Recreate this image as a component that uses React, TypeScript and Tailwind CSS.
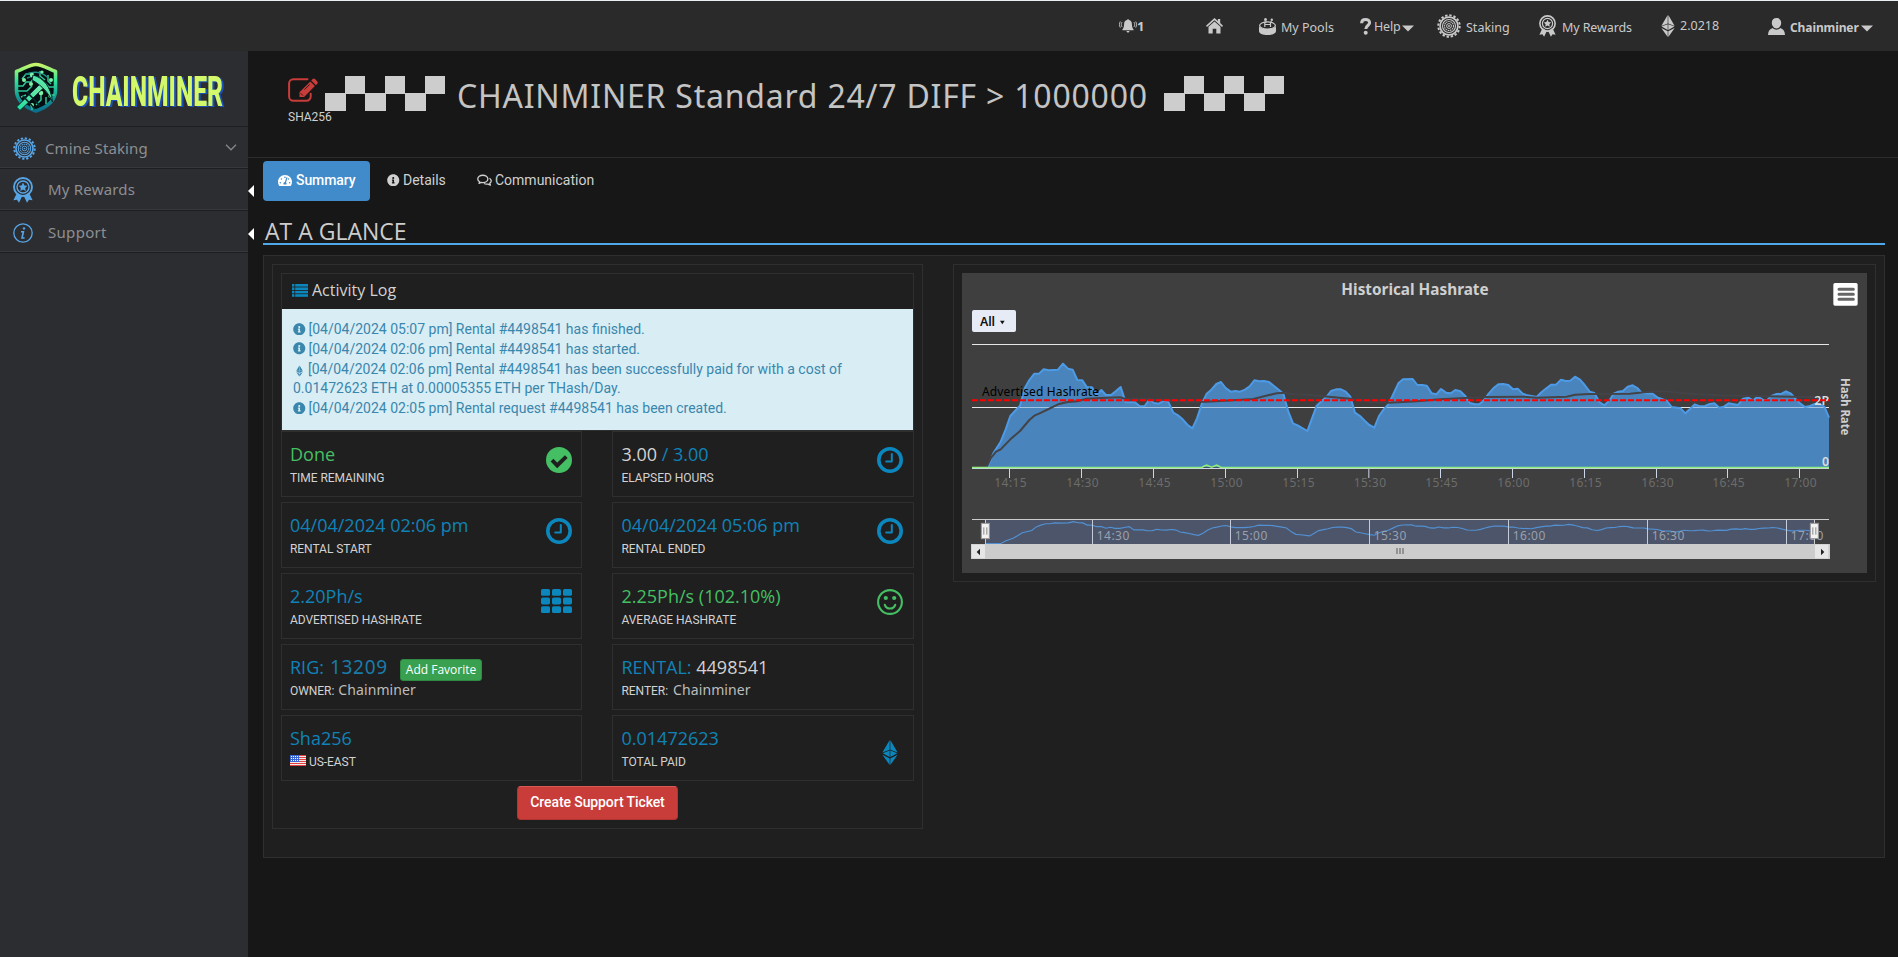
import React from "react";
import { FaInfoCircle, FaTachometerAlt } from "react-icons/fa";

type IconProps = { className?: string };

const GearIcon = ({ className }: IconProps) => (
  <svg viewBox="0 0 24 24" className={className} fill="none" stroke="currentColor">
    <circle cx="12" cy="12" r="10.7" strokeWidth="2" strokeDasharray="2.4 1.8" />
    <circle cx="12" cy="12" r="8.9" strokeWidth="1.7" />
    <circle cx="12" cy="12" r="6.5" strokeWidth="1.1" />
    <circle cx="12" cy="12" r="4.5" strokeWidth="1.1" strokeDasharray="1.6 .6" />
    <circle cx="12" cy="12" r="2.4" strokeWidth="1" />
    <circle cx="12" cy="12" r=".9" fill="currentColor" stroke="none" />
  </svg>
);

const RibbonIcon = ({ className }: IconProps) => (
  <svg viewBox="0 0 20 26" className={className} fill="none" stroke="currentColor">
    <path d="M4.2 15.5 0.4 23.3l3.6-.6 2 3 3.2-6.8ZM15.8 15.5l3.8 7.8-3.6-.6-2 3-3.2-6.8Z" fill="currentColor" stroke="none" />
    <circle cx="10" cy="10" r="9" strokeWidth="1.9" />
    <circle cx="10" cy="10" r="6" strokeWidth="1.4" />
    <path d="m10 5.6 1.35 2.8 3.05.4-2.2 2.15.5 3.05L10 12.5 7.3 14l.5-3.05L5.6 8.8l3.05-.4Z" fill="currentColor" stroke="none" />
  </svg>
);

const ClockIcon = () => (
  <svg viewBox="0 0 26 26" className="size-[26px] text-[#0b87bd]" fill="none" stroke="currentColor">
    <circle cx="13" cy="13" r="11.2" strokeWidth="3.6" />
    <path d="M14.8 7v7.6H9.2" strokeWidth="2" strokeLinecap="round" strokeLinejoin="round" />
  </svg>
);

const CheckIcon = () => (
  <svg viewBox="0 0 26 26" className="size-[26px]">
    <circle cx="13" cy="13" r="13" fill="#45bf63" />
    <path d="m6 13.2 5.2 5.2L20.3 9.6" fill="none" stroke="#1f1f1f" strokeWidth="3.9" />
  </svg>
);

const SmileIcon = () => (
  <svg viewBox="0 0 26 26" className="size-[26px]" fill="none" stroke="#45bf63" strokeWidth="2.1">
    <circle cx="13" cy="13" r="11.9" />
    <path d="M7.8 15.8a5.5 5.5 0 0 0 10.4 0" strokeLinecap="round" />
    <circle cx="8.8" cy="9" r="2.1" fill="#45bf63" stroke="none" />
    <circle cx="17.2" cy="9" r="2.1" fill="#45bf63" stroke="none" />
  </svg>
);

const GridIcon = () => (
  <svg viewBox="0 0 31 24" className="h-6 w-[31px]" fill="#0b87bd">
    {[0, 8.6, 17.2].map((y) =>
      [0, 11, 22].map((x) => <rect key={`${x}-${y}`} x={x} y={y} width="9" height="6.8" rx="1.6" />),
    )}
  </svg>
);

const ListIcon = () => (
  <svg viewBox="0 0 16 13" className="-mt-[3px] h-[13px] w-4" fill="#0b87bd">
    {[0, 3.4, 6.8, 10.2].map((y) => (
      <g key={y}>
        <rect x="0" y={y} width="2.4" height="2.6" />
        <rect x="3.2" y={y} width="12.8" height="2.6" />
      </g>
    ))}
  </svg>
);

const EditIcon = () => (
  <svg viewBox="0 0 30 24" className="h-6 w-[30px]" fill="none" stroke="#c83c3a">
    <path d="M19.5 1.2H5.3A4.2 4.2 0 0 0 1.1 5.4v13.2a4.2 4.2 0 0 0 4.2 4.2h13.2a4.2 4.2 0 0 0 4.2-4.2v-2.8" strokeWidth="2" strokeLinecap="round" />
    <path d="m11.5 14.2 10.8-10.8 4.6 4.6L16.1 18.9h-4.6Z" fill="#c83c3a" stroke="none" />
    <path d="m23.2 2.5 1.4-1.4a1.8 1.8 0 0 1 2.4 0l2.3 2.3a1.8 1.8 0 0 1 0 2.4l-1.4 1.4Z" fill="#c83c3a" stroke="none" />
    <path d="m16.5 11.6 5.2-5.2M12.6 15.2l2.4 2.4" stroke="#171717" strokeWidth=".9" />
  </svg>
);

const CommentsIcon = () => (
  <svg viewBox="0 0 16 13" className="h-[13px] w-[15px]" fill="none" stroke="currentColor" strokeWidth="1.4" strokeLinejoin="round">
    <path d="M6.2.9C3.2.9.8 2.6.8 4.8c0 1.2.8 2.3 2 3L2.2 9.6l2.2-1.1c.6.1 1.2.2 1.8.2 3 0 5.4-1.7 5.4-3.9S9.2.9 6.2.9Z" />
    <path d="M13.3 4.1c1.2.7 1.9 1.6 1.9 2.7 0 1.1-.6 2-1.6 2.7l.7 2-2.5-1.2c-1.5.3-3.1.1-4.3-.6" />
  </svg>
);

const BellIcon = () => (
  <svg viewBox="0 0 18 14" className="h-[14px] w-[18px]" fill="currentColor">
    <path d="M9 .2c.6 0 1 .4 1 .9 2 .5 2.9 2 2.9 4 0 2.8.6 4.3 1.7 5.4v.8H3.4v-.8c1.1-1.1 1.7-2.6 1.7-5.4 0-2 .9-3.5 2.9-4 0-.5.4-.9 1-.9ZM7.5 12h3c0 .9-.6 1.5-1.5 1.5S7.5 12.9 7.5 12Z" />
    <path d="M3 3.2c-.9 1.5-.9 3.2 0 4.7M1.3 2.5c-1.1 2-1.1 4.1 0 6.1M15 3.2c.9 1.5.9 3.2 0 4.7M16.7 2.5c1.1 2 1.1 4.1 0 6.1" fill="none" stroke="currentColor" strokeWidth=".9" />
  </svg>
);

const HomeIcon = () => (
  <svg viewBox="0 0 17 16" className="h-4 w-[17px]" fill="currentColor">
    <path d="M8.5 0 11.9 3V1h2.3v4.1L17 7.7l-1 1.2L8.5 2.2 1 8.9 0 7.7Z" />
    <path d="m8.5 3.4 6 5.4v6.7h-4.2v-4.7H6.7v4.7H2.5V8.8Z" />
  </svg>
);

const PoolIcon = () => (
  <svg viewBox="0 0 17 17" className="ml-px size-[17px]" fill="currentColor">
    <circle cx="6.5" cy="1.5" r="1.5" />
    <circle cx="12.8" cy="1.7" r="1.2" />
    <ellipse cx="8.5" cy="7.5" rx="7.9" ry="3.6" fill="none" stroke="currentColor" strokeWidth="1.2" />
    <path d="M0 8.5c2.5 3.4 14.500 3.4 17 0v4.7c0 2.2-3.8 3.8-8.500 3.8S0 15.4 0 13.2Z" />
    <path d="M5.8 9V4.2l1.8-.4M11.5 9V4.2l1.5-.4M5.8 6.500h5.7" fill="none" stroke="currentColor" strokeWidth="1.2" />
  </svg>
);

const UserIcon = () => (
  <svg viewBox="0 0 17 17" className="ml-px size-[17px]" fill="currentColor">
    <path d="M8.5 0c2.800 0 4.700 1.900 4.700 4.800 0 2.700-1.800 5.700-4.700 5.700S3.800 7.500 3.800 4.800C3.800 1.900 5.700 0 8.500 0ZM4.700 10c2.200 2.300 5.400 2.300 7.600 0 2.900.9 4.500 2.900 4.700 6.900H0c.2-4 1.800-6 4.700-6.900Z" />
  </svg>
);

const EthIcon = ({ className }: IconProps) => (
  <svg viewBox="0 0 14 22" className={className} fill="currentColor">
    <path d="M6.7 0v8.500L.3 11ZM7.3 0v8.500l6.400 2.500ZM6.700 9.200v5.800L.6 11.600ZM7.300 9.200v5.800l6.100-3.400ZM6.700 16.300V22L.3 13ZM7.300 16.300V22l6.400-9Z" />
  </svg>
);

const Flag = () => (
  <svg viewBox="0 0 16 11" className="h-[11px] w-4">
    <rect width="16" height="11" fill="#f4e9e9" />
    {[0, 2, 4, 6, 8, 10].map((y) => (
      <rect key={y} y={y} width="16" height="1" fill="#e0403f" />
    ))}
    <rect width="9" height="7" fill="#3a66d6" />
    {[1, 3, 5].map((y) => (
      <path key={y} d={`M1 ${y}.5h7`} stroke="#fff" strokeWidth="1" strokeDasharray="1 1" />
    ))}
  </svg>
);

const Checkers = () => (
  <svg viewBox="0 0 120 35" className="h-[35px] w-[120px]" fill="#cdcdcd" shapeRendering="crispEdges">
    {[0, 40, 80].map((x) => (
      <g key={x}>
        <rect x={x} y="17" width="21" height="18" />
        <rect x={x + 20} y="0" width="20" height="18" />
      </g>
    ))}
  </svg>
);

const Logo = () => (
  <svg viewBox="0 0 240 60" className="h-[60px] w-[240px] overflow-visible">
    <defs>
      <linearGradient id="shield" x1="0" y1="0" x2="0" y2="1">
        <stop offset="0" stopColor="#c6f56a" />
        <stop offset=".35" stopColor="#2fe39a" />
        <stop offset=".7" stopColor="#129a94" />
        <stop offset="1" stopColor="#0b6f8c" />
      </linearGradient>
      <linearGradient id="pick" x1="1" y1="0" x2="0" y2="1">
        <stop offset="0" stopColor="#7fe8a8" />
        <stop offset="1" stopColor="#1fe0a0" />
      </linearGradient>
    </defs>
    <path d="M36 9.5c5.500 0 11 3.500 19.500 7v18.500c0 10-8 17-19.500 21-11.500-4-19.500-11-19.500-21V16.500C25 13 30.500 9.500 36 9.500Z" fill="#050d10" stroke="url(#shield)" strokeWidth="3.6" strokeLinejoin="round" />
    <g fill="none" stroke="#2fc596" strokeWidth="1.5">
      <path d="M17 31h6l3-4h5l3-4M18 36h9l5-5M22 24l4-5h7M40 16v5l5 4M48 20v6l3 3M55 32h-6l-4-4M55 40h-5l-3-3M41 38v7l-5 5M32 50v5M46 42v7M26 40l-5 2" />
      <path d="M25 20c6-4 16-4 22 2M27 23c5-2 9-2 13 0" stroke="#1b8f86" />
    </g>
    <g fill="#7df0a4">
      <circle cx="32" cy="20" r="2.2" />
      <circle cx="24" cy="25" r="2" />
      <circle cx="31" cy="29" r="2" />
      <circle cx="41" cy="38" r="2.3" />
      <circle cx="51" cy="25" r="2" />
      <circle cx="32" cy="50" r="2" />
      <circle cx="50" cy="41" r="1.7" />
      <circle cx="42" cy="17" r="1.6" />
    </g>
    <path d="M16.5 52 41 28l4 3.6L20 55.5Z" fill="url(#pick)" stroke="#06262a" />
    <path d="M33 20c11 3 18 12 19.5 27-4-9-10-16-20.5-22Z" fill="url(#pick)" stroke="#06262a" />
    <path d="m27 37 13 14M23 41l12 13" stroke="#06262a" strokeWidth="1.8" />
    <text
      x="72"
      y="51"
      fontFamily="Roboto, sans-serif"
      fontWeight="800"
      fontSize="42"
      textLength="151"
      lengthAdjust="spacingAndGlyphs"
      fill="#d3f96b"
      className="drop-shadow-[2px_1px_0_#1a50b8]"
    >
      CHAINMINER
    </text>
  </svg>
);

const Caret = () => (
  <svg viewBox="0 0 12 7" className="ml-[2px] mt-[4px] h-[7px] w-3" fill="currentColor">
    <path d="M0 .5h12L6 6.5Z" />
  </svg>
);

const Header = () => (
  <header className="h-[51px] border-t border-[#e8eef1] bg-[#2a2a2a] pl-[1119px] text-[#c9c9c9]">
    <nav className="flex h-[50px] items-center whitespace-nowrap font-['Noto_Sans',sans-serif] text-[12.5px]">
      <div className="flex w-[87px] items-center text-[13px] font-bold">
        <BellIcon />
        <span className="mt-px">1</span>
      </div>
      <div className="w-[52px]">
        <HomeIcon />
      </div>
      <div className="flex w-[102px] items-center">
        <PoolIcon />
        <span className="ml-[5px] mt-[4px]">My Pools</span>
      </div>
      <div className="flex w-[77px] items-center">
        <svg viewBox="0 0 11 17" className="h-[17px] w-[11px]" fill="none" stroke="currentColor">
          <path d="M1.6 5.2c0-5 8-4.6 8-.6 0 3-3.8 2.8-3.8 6.4" strokeWidth="3" />
          <circle cx="5.7" cy="14.8" r="2" fill="currentColor" stroke="none" />
        </svg>
        <span className="ml-[3px] mt-[3px] tracking-[-0.2px]">Help</span>
        <Caret />
      </div>
      <div className="flex w-[102px] items-center">
        <GearIcon className="size-6" />
        <span className="ml-[5px] mt-[4px]">Staking</span>
      </div>
      <div className="flex w-[122px] items-center">
        <RibbonIcon className="h-[22px] w-[17px]" />
        <span className="ml-[6px] mt-[4px] tracking-[-0.1px]">My Rewards</span>
      </div>
      <div className="flex w-[106px] items-center">
        <EthIcon className="h-[22px] w-[14px]" />
        <span className="ml-[5px] mt-px">2.0218</span>
      </div>
      <div className="flex items-center">
        <UserIcon />
        <span className="ml-[5px] mt-[3px] text-[12px] font-bold tracking-[-0.1px]">Chainminer</span>
        <Caret />
      </div>
    </nav>
  </header>
);

const Sidebar = () => (
  <aside className="h-[906px] w-[248px] shrink-0 bg-[#2c2d31] font-['Noto_Sans',sans-serif] text-[15px] text-[#8d8f93]">
    <div className="h-[75px] pt-[4px]">
      <Logo />
    </div>
    <div className="flex h-[42px] items-center border-y border-b-[#37383c] border-t-[#1d1e20] pl-[13px] pt-[2px]">
      <GearIcon className="size-[23px] text-[#58a5e5]" />
      <span className="ml-[9px] tracking-[0.1px]">Cmine Staking</span>
      <svg viewBox="0 0 12 7" className="ml-auto mr-[11px] h-[7px] w-3 -translate-y-px" fill="none" stroke="#85878b" strokeWidth="1.3">
        <path d="m1 .8 5 5 5-5" />
      </svg>
    </div>
    <div className="flex h-[42px] items-center border-y border-b-[#37383c] border-t-[#1d1e20] pl-[13px] pt-px">
      <RibbonIcon className="h-[26px] w-5 text-[#58a5e5]" />
      <span className="ml-[15px] tracking-[0.2px]">My Rewards</span>
    </div>
    <div className="flex h-[42px] items-center border-y border-b-[#37383c] border-t-[#1d1e20] pl-[13px] pt-[3px]">
      <svg viewBox="0 0 20 20" className="size-5" fill="none" stroke="#58a5e5">
        <circle cx="10" cy="10" r="9.2" strokeWidth="1.3" />
        <circle cx="11" cy="5.4" r="1.2" fill="#58a5e5" stroke="none" />
        <path d="M8 8.8h2.4L9 15h2.6" strokeWidth="1.6" />
      </svg>
      <span className="ml-[15px] tracking-[0.3px]">Support</span>
    </div>
    <div className="h-px bg-[#1d1e20]" />
  </aside>
);

const Pointer = ({ className }: IconProps) => (
  <svg viewBox="0 0 6 12" className={`h-3 w-[6px] ${className ?? ""}`} fill="#fff">
    <path d="M6 0v12L0 6Z" />
  </svg>
);

type StatProps = { value: React.ReactNode; label: React.ReactNode; icon?: React.ReactNode };

const Stat = ({ value, label, icon }: StatProps) => (
  <div className="flex h-[66px] justify-between border border-[#2f2f2f] pl-2 pr-[9px] even:pl-[8.5px] even:pr-[10px]">
    <div className="pt-[9px]">
      <div className="flex h-[26px] items-baseline whitespace-nowrap font-['Open_Sans',sans-serif] text-[18px] leading-[26px] text-[#0f83b8]">
        {value}
      </div>
      <div className="mt-px flex h-5 items-baseline whitespace-nowrap font-[Roboto,sans-serif] text-[12px] leading-5 tracking-[-0.05px] text-[#d2d2d2]">
        {label}
      </div>
    </div>
    <div className="pt-[15px]">{icon}</div>
  </div>
);

const log = [
  { icon: "info", text: "[04/04/2024 05:07 pm] Rental #4498541 has finished." },
  { icon: "info", text: "[04/04/2024 02:06 pm] Rental #4498541 has started." },
  {
    icon: "eth",
    text: "[04/04/2024 02:06 pm] Rental #4498541 has been successfully paid for with a cost of 0.01472623 ETH at 0.00005355 ETH per THash/Day.",
  },
  { icon: "info", text: "[04/04/2024 02:05 pm] Rental request #4498541 has been created." },
];

const ActivityPanel = () => (
  <section className="h-[565px] w-[651px] shrink-0 border border-[#2f2f2f] p-2">
    <div className="h-[158px] border border-[#2f2f2f]">
      <div className="flex h-[35px] items-center pl-[10px] font-['Open_Sans',sans-serif] text-[16px] text-[#d2d2d2]">
        <ListIcon />
        <span className="-mt-[3px] ml-1">Activity Log</span>
      </div>
      <div className="h-[121px] bg-[#d9edf5] pl-[11px] pr-[60px] pt-[11px] font-[Roboto,sans-serif] text-[14px] leading-[19.8px] text-[#3a87ad]">
        {log.map((l) => (
          <div key={l.text}>
            {l.icon === "info" ? (
              <FaInfoCircle className="mr-[3px] inline size-[12.5px] align-[-1px]" />
            ) : (
              <EthIcon className="ml-[3px] mr-[5px] inline h-[12px] w-[7px] align-[-3px]" />
            )}
            {l.text}
          </div>
        ))}
      </div>
    </div>
    <div className="grid grid-cols-[301px_302px] justify-between gap-y-[5px]">
      <Stat value={<span className="text-[#45bf63]">Done</span>} label="TIME REMAINING" icon={<CheckIcon />} />
      <Stat
        value={
          <span>
            <span className="text-[#d2d2d2]">3.00</span> / 3.00
          </span>
        }
        label="ELAPSED HOURS"
        icon={<ClockIcon />}
      />
      <Stat value="04/04/2024 02:06 pm" label="RENTAL START" icon={<ClockIcon />} />
      <Stat value="04/04/2024 05:06 pm" label="RENTAL ENDED" icon={<ClockIcon />} />
      <Stat value="2.20Ph/s" label="ADVERTISED HASHRATE" icon={<GridIcon />} />
      <Stat value={<span className="text-[#45bf63]">2.25Ph/s (102.10%)</span>} label="AVERAGE HASHRATE" icon={<SmileIcon />} />
      <Stat
        value={
          <>
            RIG:
            <span className="ml-[6px] font-['Noto_Sans',sans-serif] text-[19px] tracking-[0.7px] text-[#1b7ba8]">13209</span>
            <button className="ml-3 h-[22px] rounded-[3px] border border-[#2f8a44] bg-[#38a04f] px-[5px] font-['Open_Sans',sans-serif] text-[12px] leading-5 text-white">
              Add Favorite
            </button>
          </>
        }
        label={
          <>
            OWNER:<span className="ml-1 font-['Noto_Sans',sans-serif] text-[14px] leading-[18px] tracking-[0.1px] text-[#bdbdbd]">Chainminer</span>
          </>
        }
      />
      <Stat
        value={
          <span>
            RENTAL: <span className="text-[#d2d2d2]">4498541</span>
          </span>
        }
        label={
          <>
            RENTER:<span className="ml-[5px] font-['Noto_Sans',sans-serif] text-[14px] leading-[18px] tracking-[0.1px] text-[#bdbdbd]">Chainminer</span>
          </>
        }
      />
      <Stat
        value="Sha256"
        label={
          <>
            <Flag />
            <span className="ml-[3px]">US-EAST</span>
          </>
        }
      />
      <Stat value="0.01472623" label="TOTAL PAID" icon={<EthIcon className="mr-[5px] mt-[9px] h-[25px] w-4 text-[#0b87bd]" />} />
    </div>
    <div className="mt-[5px] flex justify-center">
      <button className="h-[34px] w-[161px] rounded-[4px] border border-[#b23330] border-t-[#d75a55] bg-[#c83c3a] pb-px font-[Roboto,sans-serif] text-[14px] font-medium tracking-[-0.1px] text-white">
        Create Support Ticket
      </button>
    </div>
  </section>
);

/* Chart geometry: three drawing units per pixel. */
const series: [number, number][] = [
  [96, 652], [143, 652], [160, 610], [182, 575], [197, 538], [211, 498], [240, 467], [254, 415], [268, 390], [283, 371],
  [297, 371], [311, 358], [326, 361], [354, 359], [369, 341], [384, 356], [398, 359], [412, 390], [427, 391], [441, 412],
  [456, 412], [470, 434], [484, 420], [498, 435], [513, 435], [527, 424], [542, 411], [557, 457], [585, 457], [599, 469],
  [614, 468], [628, 449], [642, 459], [657, 461], [671, 452], [685, 456], [700, 488], [714, 496], [728, 508], [743, 525],
  [757, 535], [771, 505], [786, 460], [800, 431], [814, 419], [829, 402], [843, 396], [857, 414], [872, 425], [886, 423],
  [900, 425], [915, 419], [929, 409], [943, 391], [958, 394], [972, 393], [987, 396], [1001, 407], [1016, 419], [1030, 431],
  [1045, 485], [1059, 520], [1073, 526], [1102, 543], [1116, 505], [1130, 467], [1145, 453], [1159, 441], [1173, 423],
  [1188, 418], [1203, 418], [1217, 425], [1231, 440], [1245, 488], [1260, 498], [1274, 512], [1288, 525], [1303, 533],
  [1317, 498], [1331, 478], [1346, 462], [1360, 432], [1375, 400], [1389, 388], [1418, 387], [1432, 405], [1447, 405],
  [1460, 407], [1475, 430], [1489, 433], [1503, 417], [1518, 428], [1532, 430], [1546, 420], [1561, 424], [1575, 437],
  [1590, 459], [1605, 463], [1618, 463], [1632, 450], [1646, 431], [1660, 415], [1675, 403], [1690, 402], [1705, 405],
  [1719, 418], [1733, 416], [1748, 431], [1762, 436], [1790, 441], [1805, 426], [1819, 415], [1834, 404], [1848, 404],
  [1863, 389], [1877, 393], [1891, 392], [1905, 380], [1920, 389], [1934, 405], [1949, 425], [1963, 429], [1978, 456],
  [1993, 466], [2007, 453], [2021, 431], [2035, 425], [2049, 423], [2063, 410], [2078, 406], [2092, 414], [2105, 429],
  [2138, 431], [2152, 442], [2180, 452], [2195, 471], [2222, 475], [2236, 490], [2250, 477], [2264, 463], [2280, 469],
  [2295, 468], [2309, 462], [2323, 460], [2338, 473], [2352, 470], [2366, 460], [2394, 465], [2409, 446], [2425, 443],
  [2439, 451], [2453, 440], [2468, 449], [2482, 450], [2494, 438], [2510, 432], [2525, 431], [2538, 424], [2553, 431],
  [2567, 447], [2581, 461], [2595, 471], [2610, 468], [2624, 462], [2638, 462], [2653, 470], [2667, 503],
];

const average =
  "96,651 140,651 152,625 168,605 182,598 211,568 240,543 268,510 283,497 297,491 326,477 354,463 383,456 412,454 440,446 485,444 540,442 557,447 628,447 690,451 740,456 800,455 880,451 940,447 975,438 1010,430 1035,428 1060,433 1100,434 1150,439 1231,446 1290,456 1345,458 1432,454 1500,448 1575,444 1640,441 1750,440 1790,443 1880,440 1905,434 1949,432 2070,431 2120,426 2165,423 2250,431 2340,436 2450,438 2560,440 2667,442";

const line = series.map((p) => p.join(",")).join(" ");
const navLine = series.map(([x, y]) => `${136 + (x - 96) * 0.9673},${815 + (y - 341) * 0.212}`).join(" ");

const ticks: [number, string][] = [
  [208, "14:15"], [424, "14:30"], [640, "14:45"], [856, "15:00"], [1072, "15:15"], [1286, "15:30"], [1501, "15:45"],
  [1717, "16:00"], [1933, "16:15"], [2149, "16:30"], [2362, "16:45"], [2578, "17:00"],
];
const navTicks: [number, string][] = [
  [457, "14:30"], [871, "15:00"], [1288, "15:30"], [1705, "16:00"], [2122, "16:30"], [2539, "17:00"],
];

const chartFont = "'Noto Sans', sans-serif";

const Handle = ({ x }: { x: number }) => (
  <g transform={`translate(${x} 820)`}>
    <rect x="-12" y="0" width="24" height="46" fill="#f2f2f2" stroke="#999" strokeWidth="3" />
    <path d="M-4.5 12v22M4.5 12v22" stroke="#888" strokeWidth="3" />
  </g>
);

const Chart = () => (
  <svg viewBox="66 69 2715 900" className="h-[300px] w-[905px] bg-[#3f3f3f]" fontFamily={chartFont}>
    <text x="1204" y="136" fontSize="46" fontWeight="700" fill="#cfcfcf" textLength="442" lengthAdjust="spacingAndGlyphs">
      Historical Hashrate
    </text>
    <rect x="96" y="180" width="132" height="66" rx="6" fill="#e6ebf5" />
    <text x="120" y="228" fontSize="37" fontWeight="600" fill="#111" textLength="45">
      All
    </text>
    <path d="M180 212h14l-7 11Z" fill="#111" />
    <rect x="2680" y="99" width="73" height="68" rx="5" fill="#fff" />
    <path d="M2697 118h43M2697 133h43M2697 148h43" stroke="#666" strokeWidth="9" strokeLinecap="round" />

    <path d="M96 283.5H2667M96 472.5H2667" stroke="#e6e6e6" strokeWidth="3" />
    <polygon points={`${line} 2667,652 96,652`} fill="#4a8bc6" fillOpacity=".93" />
    <clipPath id="area">
      <polygon points={`${line} 2667,652 96,652`} />
    </clipPath>
    <path d="M234 472.5H2667" stroke="#a5c3e0" strokeWidth="3" clipPath="url(#area)" />
    <polyline points={line} fill="none" stroke="#4d9ae6" strokeWidth="6" strokeLinejoin="round" />
    <polyline points={average} fill="none" stroke="#434348" strokeWidth="6" strokeLinejoin="round" />
    <path d="M96 655.5H2667" stroke="#ccd6eb" strokeWidth="3" />
    <path d="M96 652.5H786l6-4 8-3 8 3 7 3 7-3 8-3 8 4 5 3H2667" fill="none" stroke="#90ed7d" strokeWidth="5" />
    <g fill="#dcdcdc" fontSize="37" fontWeight="600" textAnchor="end">
      <text x="2667" y="465">2P</text>
      <text x="2667" y="648">0</text>
    </g>
    <path d="M96 450.5H2667" stroke="#ff0000" strokeWidth="6" strokeDasharray="18 6" />
    <text x="126" y="438" fontSize="36" fill="#000" textLength="351">
      Advertised Hashrate
    </text>
    <text transform="translate(2703 384) rotate(90)" y="1" fontSize="37" fontWeight="700" fill="#cfcfcf" textLength="172" lengthAdjust="spacingAndGlyphs">
      Hash Rate
    </text>
    {ticks.map(([x, t]) => (
      <g key={t}>
        <path d={`M${x + 0.5} 657v27`} stroke="#ccd6eb" strokeWidth="3" />
        <text x={x - 45} y="710" fontSize="36" fill="#6c6c6c" textLength="97">
          {t}
        </text>
      </g>
    ))}

    <rect x="136" y="808" width="2487" height="74" fill="#4c556a" />
    <polyline points={navLine} fill="none" stroke="#5291d3" strokeWidth="3.5" />
    {navTicks.map(([x, t]) => (
      <g key={t}>
        <path d={`M${x + 0.5} 810v72`} stroke="#c5cbd8" strokeWidth="3" />
        <text x={x + 13} y="869" fontSize="36" fill="#9aa0ad" textLength="98">
          {t}
        </text>
      </g>
    ))}
    <path d="M96 808.5H2667" stroke="#ccc" strokeWidth="3" />
    <path d="M136.5 808v74M2623.5 808v74" stroke="#ccc" strokeWidth="3" />
    <Handle x={136} />
    <Handle x={2623} />
    <rect x="93" y="882" width="2577" height="45" fill="#ccc" />
    <rect x="95" y="884" width="40" height="41" fill="#e6e6e6" />
    <rect x="2625" y="884" width="40" height="41" fill="#e6e6e6" />
    <path d="M120 896v20l-10-10ZM2643 896v20l10-10Z" fill="#222" />
    <path d="M1371 894v18M1380 894v18M1389 894v18" stroke="#888" strokeWidth="5" />
  </svg>
);

export default function App() {
  return (
    <div className="h-[957px] w-[1898px] overflow-hidden bg-[#171717]">
      <Header />
      <div className="flex">
        <Sidebar />
        <div className="w-[15px] shrink-0 pt-[106px]">
          <div className="-mb-1 h-px w-[1650px] bg-[#2c2c2c]" />
          <Pointer className="mt-[31px]" />
          <Pointer className="mt-[31px]" />
        </div>
        <main className="w-[1622px]">
          <div className="flex h-[107px] pl-[25px] pt-[25px]">
            <div className="w-[37px] shrink-0 pt-[2px]">
              <EditIcon />
              <div className="mt-[5px] font-[Roboto,sans-serif] text-[12px] leading-5 text-[#d0d0d0]">SHA256</div>
            </div>
            <Checkers />
            <h1 className="ml-[12px] w-[707px] whitespace-nowrap pt-px font-['Noto_Sans',sans-serif] text-[32px] font-normal leading-[38px] tracking-[0.78px] text-[#c4c4c4]">
              CHAINMINER Standard 24/7 DIFF &gt; 1000000
            </h1>
            <Checkers />
          </div>
          <div className="mt-[3px] flex h-10 font-[Roboto,sans-serif] text-[14px] text-[#d0d0d0]">
            <div className="flex w-[107px] items-center gap-1 rounded-[4px] bg-[#428bca] pb-[2px] pl-[15px] font-medium tracking-[-0.1px] text-white">
              <FaTachometerAlt className="h-[13px] w-[14px]" />
              Summary
            </div>
            <div className="flex w-[107px] items-center gap-[3.5px] pb-[2px] pl-[17px]">
              <FaInfoCircle className="size-[12.5px]" />
              Details
            </div>
            <div className="flex items-center gap-[3px] pb-[2px]">
              <CommentsIcon />
              Communication
            </div>
          </div>
          <h2 className="mt-[12px] h-8 whitespace-nowrap border-b-2 border-[#4fa9e8] pl-[2px] font-['Open_Sans',sans-serif] text-[23px] leading-[37px] text-[#cdcdcd]">
            AT A GLANCE
          </h2>
          <div className="mt-[10px] flex h-[603px] gap-[30px] border border-[#2f2f2f] bg-[#1f1f1f] p-2">
            <ActivityPanel />
            <section className="h-[318px] w-[923px] shrink-0 border border-[#2f2f2f] p-2">
              <Chart />
            </section>
          </div>
        </main>
      </div>
    </div>
  );
}
